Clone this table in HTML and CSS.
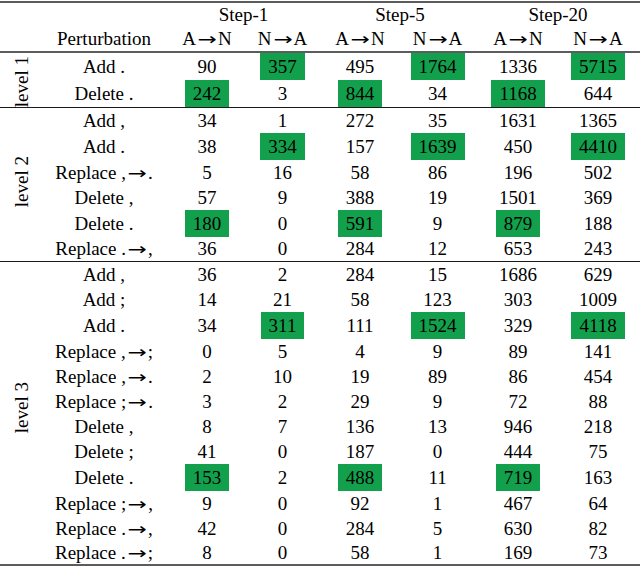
FILE: index.html
```html
<!DOCTYPE html>
<html lang="en">
<head>
<meta charset="utf-8">
<title>Perturbation table</title>
<link rel="stylesheet" href="styles.css">
</head>
<body>
<table class="tbl">
  <colgroup>
    <col class="c0"><col class="c1"><col class="c2"><col class="c3"><col class="c4"><col class="c5"><col class="c6"><col class="c7">
  </colgroup>
  <thead>
    <tr class="head1">
      <th></th><th></th>
      <th colspan="2">Step-1</th>
      <th colspan="2" class="s5">Step-5</th>
      <th colspan="2" class="s20">Step-20</th>
    </tr>
    <tr class="head2">
      <th></th>
      <th>Perturbation</th>
      <th>A<span class="ar">→</span>N</th><th>N<span class="ar">→</span>A</th>
      <th>A<span class="ar">→</span>N</th><th>N<span class="ar">→</span>A</th>
      <th>A<span class="ar">→</span>N</th><th class="lc">N<span class="ar">→</span>A</th>
    </tr>
  </thead>
  <tbody>
    <tr>
      <td rowspan="2" class="lvl-cell sep-b lv1"><span class="lvl">level 1</span></td>
      <td>Add .</td><td>90</td><td><span class="hl">357</span></td><td>495</td><td><span class="hl">1764</span></td><td>1336</td><td class="lc"><span class="hl">5715</span></td>
    </tr>
    <tr class="sep">
      <td>Delete .</td><td><span class="hl">242</span></td><td>3</td><td><span class="hl">844</span></td><td>34</td><td><span class="hl">1168</span></td><td class="lc">644</td>
    </tr>

    <tr>
      <td rowspan="6" class="lvl-cell sep-b lv2"><span class="lvl">level 2</span></td>
      <td>Add ,</td><td>34</td><td>1</td><td>272</td><td>35</td><td>1631</td><td class="lc">1365</td>
    </tr>
    <tr><td>Add .</td><td>38</td><td><span class="hl">334</span></td><td>157</td><td><span class="hl">1639</span></td><td>450</td><td class="lc"><span class="hl">4410</span></td></tr>
    <tr><td>Replace ,<span class="ar">→</span>.</td><td>5</td><td>16</td><td>58</td><td>86</td><td>196</td><td class="lc">502</td></tr>
    <tr><td>Delete ,</td><td>57</td><td>9</td><td>388</td><td>19</td><td>1501</td><td class="lc">369</td></tr>
    <tr><td>Delete .</td><td><span class="hl">180</span></td><td>0</td><td><span class="hl">591</span></td><td>9</td><td><span class="hl">879</span></td><td class="lc">188</td></tr>
    <tr class="sep"><td>Replace .<span class="ar">→</span>,</td><td>36</td><td>0</td><td>284</td><td>12</td><td>653</td><td class="lc">243</td></tr>

    <tr>
      <td rowspan="12" class="lvl-cell end-b lv3"><span class="lvl">level 3</span></td>
      <td>Add ,</td><td>36</td><td>2</td><td>284</td><td>15</td><td>1686</td><td class="lc">629</td>
    </tr>
    <tr><td>Add ;</td><td>14</td><td>21</td><td>58</td><td>123</td><td>303</td><td class="lc">1009</td></tr>
    <tr><td>Add .</td><td>34</td><td><span class="hl">311</span></td><td>111</td><td><span class="hl">1524</span></td><td>329</td><td class="lc"><span class="hl">4118</span></td></tr>
    <tr><td>Replace ,<span class="ar">→</span>;</td><td>0</td><td>5</td><td>4</td><td>9</td><td>89</td><td class="lc">141</td></tr>
    <tr><td>Replace ,<span class="ar">→</span>.</td><td>2</td><td>10</td><td>19</td><td>89</td><td>86</td><td class="lc">454</td></tr>
    <tr><td>Replace ;<span class="ar">→</span>.</td><td>3</td><td>2</td><td>29</td><td>9</td><td>72</td><td class="lc">88</td></tr>
    <tr><td>Delete ,</td><td>8</td><td>7</td><td>136</td><td>13</td><td>946</td><td class="lc">218</td></tr>
    <tr><td>Delete ;</td><td>41</td><td>0</td><td>187</td><td>0</td><td>444</td><td class="lc">75</td></tr>
    <tr><td>Delete .</td><td><span class="hl">153</span></td><td>2</td><td><span class="hl">488</span></td><td>11</td><td><span class="hl">719</span></td><td class="lc">163</td></tr>
    <tr><td>Replace ;<span class="ar">→</span>,</td><td>9</td><td>0</td><td>92</td><td>1</td><td>467</td><td class="lc">64</td></tr>
    <tr><td>Replace .<span class="ar">→</span>,</td><td>42</td><td>0</td><td>284</td><td>5</td><td>630</td><td class="lc">82</td></tr>
    <tr class="last"><td>Replace .<span class="ar">→</span>;</td><td>8</td><td>0</td><td>58</td><td>1</td><td>169</td><td class="lc">73</td></tr>
  </tbody>
</table>
</body>
</html>
```

FILE: styles.css
```css
html, body {
  margin: 0;
  padding: 0;
  background: #ffffff;
}

body {
  font-family: "Liberation Serif", "Times New Roman", serif;
  font-size: 19px;
  color: #000000;
}

.tbl {
  border-collapse: separate;
  border-spacing: 0;
  width: 640px;
  table-layout: fixed;
  margin-top: 1px;
  line-height: 20px;
}

.c0 { width: 40px; }
.c1 { width: 128px; }
.c2 { width: 78px; }
.c3 { width: 73px; }
.c4 { width: 82px; }
.c5 { width: 73px; }
.c6 { width: 88px; }
.c7 { width: 78px; }

.tbl th,
.tbl td {
  padding: 0;
  text-align: center;
  vertical-align: middle;
  font-weight: normal;
  height: 25px;
  box-sizing: border-box;
  white-space: nowrap;
}

.tbl .lc { padding-right: 6px; }

.head1 th {
  border-top: 2px solid #5c5c5c;
  height: 26px;
}

.head2 th {
  border-bottom: 2px solid #5c5c5c;
  height: 26px;
}

.tbl .s5 { padding-left: 7px; }
.tbl .s20 { padding-left: 2px; }

.sep td,
.tbl .sep-b {
  border-bottom: 1px solid #1a1a1a;
}

.last td,
.tbl .end-b {
  border-bottom: 2px solid #5c5c5c;
}

.hl {
  display: inline-block;
  background: #13a04d;
  padding: 4px 8px 3px;
}

.tbl .lvl-cell {
  padding-left: 4px;
  line-height: 0;
}
.tbl .lv1 { padding-top: 3px; }
.tbl .lv2 { padding-bottom: 7px; }
.tbl .lv3 { padding-bottom: 12px; }

.lvl {
  display: inline-block;
  vertical-align: top;
  line-height: 20px;
  writing-mode: vertical-rl;
  transform: rotate(180deg);
}

.ar {
  display: inline-block;
  width: 22px;
  text-align: center;
  font-family: "DejaVu Sans", sans-serif;
  font-size: 17px;
  line-height: 14px;
  transform: scaleX(1.35);
}
```
